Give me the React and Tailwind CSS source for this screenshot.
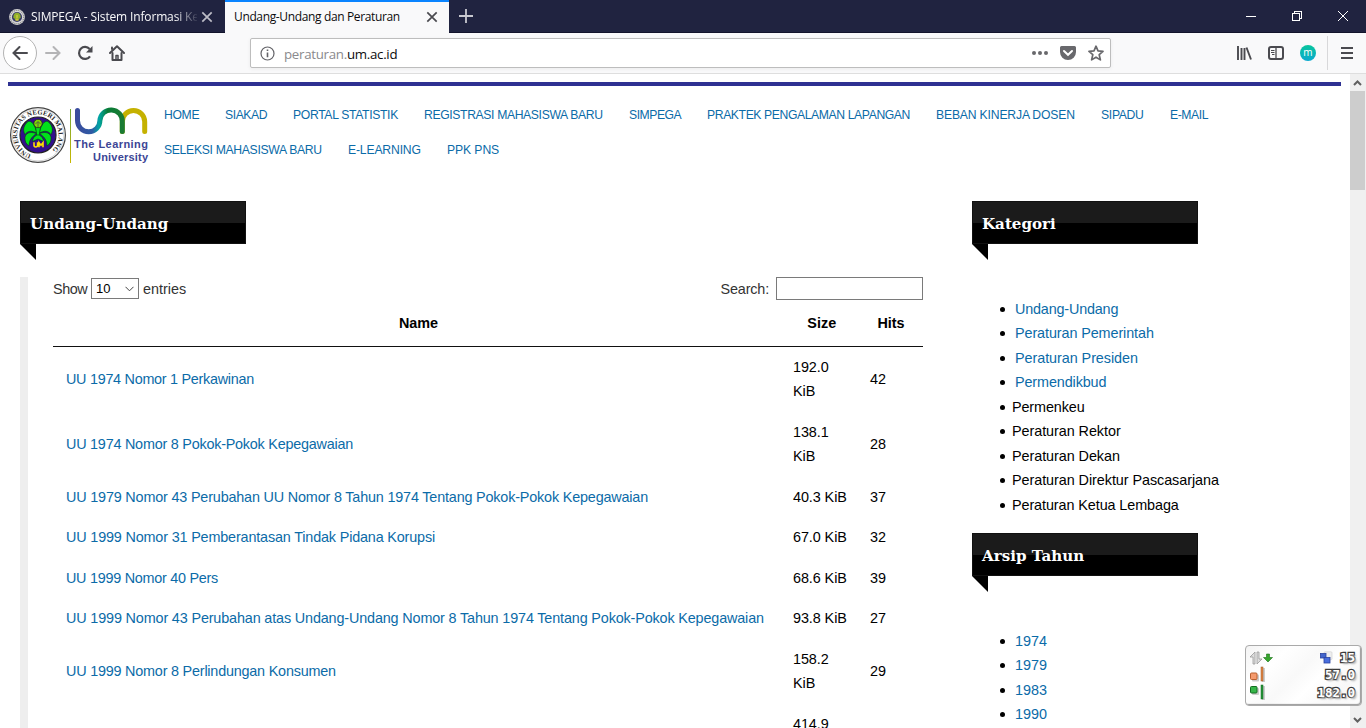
import React from "react";

const NAV_TOP = [
  ["HOME", "w-[35px] tracking-[-0.35px]"],
  ["SIAKAD", "w-[42px] tracking-[-0.43px]"],
  ["PORTAL STATISTIK", "w-[105px] tracking-[-0.34px]"],
  ["REGISTRASI MAHASISWA BARU", "w-[179px] tracking-[-0.37px]"],
  ["SIMPEGA", "w-[52px] tracking-[-0.47px]"],
  ["PRAKTEK PENGALAMAN LAPANGAN", "w-[203px] tracking-[-0.40px]"],
  ["BEBAN KINERJA DOSEN", "w-[139px] tracking-[-0.18px]"],
  ["SIPADU", "w-[43px] tracking-[-0.32px]"],
  ["E-MAIL", "w-[38px] tracking-[-0.43px]"],
];
const NAV_BOTTOM = [
  ["SELEKSI MAHASISWA BARU", "w-[158px] tracking-[-0.32px]"],
  ["E-LEARNING", "w-[73px] tracking-[-0.17px]"],
  ["PPK PNS", "w-[52px] tracking-[-0.1px]"],
];

const ROWS = [
  ["UU 1974 Nomor 1 Perkawinan", ["192.0", "KiB"], "42", "tracking-[-0.28px]"],
  ["UU 1974 Nomor 8 Pokok-Pokok Kepegawaian", ["138.1", "KiB"], "28", "tracking-[-0.23px]"],
  ["UU 1979 Nomor 43 Perubahan UU Nomor 8 Tahun 1974 Tentang Pokok-Pokok Kepegawaian", ["40.3 KiB"], "37", "tracking-[-0.178px]"],
  ["UU 1999 Nomor 31 Pemberantasan Tindak Pidana Korupsi", ["67.0 KiB"], "32", "tracking-[-0.165px]"],
  ["UU 1999 Nomor 40 Pers", ["68.6 KiB"], "39", "tracking-[-0.27px]"],
  ["UU 1999 Nomor 43 Perubahan atas Undang-Undang Nomor 8 Tahun 1974 Tentang Pokok-Pokok Kepegawaian", ["93.8 KiB"], "27", "tracking-[-0.150px]"],
  ["UU 1999 Nomor 8 Perlindungan Konsumen", ["158.2", "KiB"], "29", "tracking-[-0.21px]"],
  ["", ["414.9", "KiB"], "", ""],
];

const CATEGORIES = [
  ["Undang-Undang", true, "tracking-[-0.18px]"], ["Peraturan Pemerintah", true, "tracking-[-0.1px]"],
  ["Peraturan Presiden", true, "tracking-[-0.06px]"], ["Permendikbud", true, "tracking-[-0.12px]"],
  ["Permenkeu", false, "tracking-[-0.12px]"], ["Peraturan Rektor", false, "tracking-[-0.06px]"],
  ["Peraturan Dekan", false, "tracking-[-0.06px]"], ["Peraturan Direktur Pascasarjana", false, "tracking-[-0.06px]"],
  ["Peraturan Ketua Lembaga", false, "tracking-[-0.09px]"],
];
const YEARS = [["1974", true, ""], ["1979", true, ""], ["1983", true, ""], ["1990", true, ""]];

function Cross({ className }) {
  return (
    <svg className={className} width="12" height="12" viewBox="0 0 12 12" fill="none" stroke="currentColor" strokeWidth="1.7">
      <path d="M1.3 1.3l9.4 9.4M10.7 1.3l-9.4 9.4" />
    </svg>
  );
}

function SealMini() {
  return (
    <svg width="16" height="16" viewBox="0 0 16 16">
      <circle cx="8" cy="8" r="7.900" fill="#d9d9d9" />
      <circle cx="8" cy="8" r="6.700" fill="none" stroke="#8f8f8f" strokeWidth="1.200" strokeDasharray="1.200 .8" />
      <circle cx="8" cy="8" r="5.100" fill="#3a3d6a" />
      <path d="M8 3.800c2.400 0 3.800 1.800 3.600 4.500L9.500 11h-3L4.400 8.300C4.200 5.600 5.600 3.800 8 3.800z" fill="#8fae2c" />
      <path d="M8 6v3.500M6.500 11h3" stroke="#d8cf3a" strokeWidth="1.300" />
    </svg>
  );
}

function Seal() {
  return (
    <svg width="58" height="58" viewBox="0 0 58 58">
      <circle cx="29" cy="29" r="27.400" fill="#fff" stroke="#444" strokeWidth="1.200" />
      <circle cx="29" cy="29" r="25.900" fill="none" stroke="#aaa" strokeWidth="0.500" />
      <path id="sealRing" d="M22.200 48.600A20.700 20.700 0 1 1 37.800 47.700" fill="none" />
      <text fontFamily="Liberation Serif, serif" fontSize="6.600" fontWeight="bold" fill="#222" letterSpacing="0.120">
        <textPath href="#sealRing">UNIVERSITAS NEGERI MALANG</textPath>
      </text>
      <circle cx="29" cy="29" r="18" fill="#330f8c" stroke="#222" strokeWidth="1.200" />
      <g fill="#00e01a" stroke="#063c10" strokeWidth="0.600">
        <path d="M27.800 27C25 15 20 13.500 17.500 17c-3.500 4-3.500 8-1.500 11.500 3-4 6.500-4 11.800-1.500z" />
        <path d="M30.200 27C33 15 38 13.500 40.500 17c3.500 4 3.500 8 1.500 11.500-3-4-6.500-4-11.800-1.500z" />
        <path d="M27.500 27.500c-7-2.500-11 0-11.500 4-.3 3.500 1 6.500 4 8.500 0-5.500 2.500-9 7.500-12.500z" />
        <path d="M30.500 27.500c7-2.500 11 0 11.500 4 .3 3.500-1 6.500-4 8.500 0-5.500-2.500-9-7.500-12.500z" />
        <path d="M28.500 28.500c-3.500 2-5 4-5 7l5.500-2.500 5.500 2.500c0-3-1.500-5-5-7z" />
        <path d="M26.500 20h5l-1.200 9h-2.600z" />
      </g>
      <circle cx="29" cy="17.500" r="4.200" fill="#7fd800" stroke="#222" strokeWidth="0.800" />
      <path d="M26.500 18l2.500-2.500 2.500 2.500M29 16v5" stroke="#445" fill="none" strokeWidth=".8" />
      <path d="M25 36.200v2.800q0 2 1.800 2t1.800-2v-2.800M30 41.200v-4.500l2 2.600 2-2.600v4.500" stroke="#ffe000" strokeWidth="1.600" fill="none" />
    </svg>
  );
}

function Wordmark() {
  return (
    <svg width="82" height="58" viewBox="0 0 82 58" fill="none">
      <defs>
        <linearGradient id="bar" x1="0" y1="0" x2="0" y2="1">
          <stop offset="0" stopColor="#74a63a" /><stop offset="1" stopColor="#c9b800" />
        </linearGradient>
        <linearGradient id="arcA" gradientUnits="userSpaceOnUse" x1="8" y1="0" x2="58" y2="0">
          <stop offset="0" stopColor="#3c4a9c" /><stop offset="0.350" stopColor="#2e5ca5" />
          <stop offset="0.480" stopColor="#00a7a5" /><stop offset="0.650" stopColor="#087c38" /><stop offset="1" stopColor="#1d7b32" />
        </linearGradient>
      </defs>
      <rect x="3" y="3" width="1" height="54" fill="url(#bar)" />
      <path d="M55.300 25.500V15.700A11.200 11.200 0 0 1 77.700 15.700V25.500" stroke="#c5b100" strokeWidth="5" strokeLinecap="round" />
      <path d="M10.500 4.500V14.500A11.200 11.200 0 0 0 32.900 14.500A11.200 11.200 0 0 1 55.300 15.700V25.500" stroke="url(#arcA)" strokeWidth="5" strokeLinecap="round" />
      <g fontFamily="Liberation Sans, sans-serif" fontWeight="bold" fontSize="11" fill="#3c4595">
        <text x="7" y="41.500" textLength="74">The Learning</text>
        <text x="26" y="54.500" textLength="55">University</text>
      </g>
    </svg>
  );
}

function TabStrip() {
  return (
    <div className="flex h-[33px] shrink-0 border-b border-[#12142b] bg-[#202340] font-['Open_Sans','Noto_Sans',sans-serif] text-[12px]">
      <div className="flex w-[225px] items-center pl-[9px] pt-px text-[#f9f9fa]">
        <SealMini />
        <span className="ml-[6px] w-[166px] overflow-hidden whitespace-nowrap tracking-[-0.15px] [mask-image:linear-gradient(to_right,black_144px,transparent_168px)]">
          SIMPEGA - Sistem Informasi Kep
        </span>
        <Cross className="ml-[4px] text-[#bcbcc6]" />
      </div>
      <div className="-mb-px flex w-[224px] items-center border-t-2 border-[#0a84ff] bg-[#f9f9fa] pb-px pl-[9px] text-[#0c0c0d]">
        <span className="w-[192px] whitespace-nowrap tracking-[-0.36px]">Undang-Undang dan Peraturan</span>
        <Cross className="text-[#4a4a4f]" />
      </div>
      <div className="flex items-center pl-[10px]">
        <svg width="14" height="14" viewBox="0 0 14 14" stroke="#c8c8d0" strokeWidth="1.800"><path d="M7 0v14M0 7h14" /></svg>
      </div>
      <div className="ml-auto flex items-center gap-9 pr-[18px] text-white">
        <svg width="10" height="10" viewBox="0 0 10 10" stroke="currentColor" shapeRendering="crispEdges"><path d="M0 5.500h10" /></svg>
        <svg width="10" height="10" viewBox="0 0 10 10" stroke="currentColor" fill="none" shapeRendering="crispEdges"><path d="M.5 2.500h7v7h-7zM2.500 2V.5h7v7H8" /></svg>
        <svg width="10" height="10" viewBox="0 0 10 10" stroke="currentColor"><path d="M0 0l10 10M10 0L0 10" /></svg>
      </div>
    </div>
  );
}

function Toolbar() {
  return (
    <div className="flex h-[41px] shrink-0 items-center border-b border-[#dedede] bg-[#f9f9fa]">
      <div className="ml-[3px] flex h-[34px] w-[34px] items-center justify-center rounded-full border border-[#b3b3b3] bg-white">
        <svg width="16" height="16" viewBox="0 0 16 16" fill="none" stroke="#4a4a4f" strokeWidth="2" strokeLinecap="round"><path d="M15 8H1.500M7.500 2L1.500 8l6 6" /></svg>
      </div>
      <svg className="ml-[8px]" width="16" height="16" viewBox="0 0 16 16" fill="none" stroke="#b4b4b6" strokeWidth="2" strokeLinecap="round"><path d="M1 8h13.500M8.500 2l6 6-6 6" /></svg>
      <svg className="ml-[16px]" width="16" height="16" viewBox="0 0 16 16" fill="none" stroke="#4a4a4f" strokeWidth="2.200">
        <path d="M13 11.300A6 6 0 1 1 12.600 4" /><path d="M15.500 1v6.500H9z" fill="#4a4a4f" stroke="none" />
      </svg>
      <svg className="ml-[16px]" width="16" height="16" viewBox="0 0 16 16" fill="none" stroke="#4a4a4f" strokeWidth="2" strokeLinejoin="round" strokeLinecap="round">
        <path d="M1 8l7-6.800L15 8" /><path d="M3.500 8v7h9V8" /><path d="M7 15v-4.500h2V15" strokeWidth="1.500" /><path d="M3 2.500V4" />
      </svg>
      <div className="ml-[125px] flex h-[30px] w-[861px] items-center rounded-[2px] border border-[#bdbdbd] bg-white pl-[9px] pr-[6px] shadow-[0_1px_4px_rgba(0,0,0,0.06)]">
        <svg width="15" height="15" viewBox="0 0 15 15" fill="none" stroke="#636368"><circle cx="7.500" cy="7.500" r="6.500" strokeWidth="1.200" /><path d="M7.500 6.500v4.800M7.500 3.500v1.600" strokeWidth="1.600" /></svg>
        <span className="ml-[9px] pt-[3px] font-['Open_Sans','Noto_Sans',sans-serif] text-[13.300px] tracking-[-0.290px] text-[#8a8a8d]">peraturan.<span className="text-[#0c0c0d]">um.ac.id</span></span>
        <div className="ml-auto flex items-center gap-3 text-[#68686c]">
          <svg width="16" height="16" viewBox="0 0 16 16" fill="currentColor"><circle cx="2" cy="8" r="2" /><circle cx="8" cy="8" r="2" /><circle cx="14" cy="8" r="2" /></svg>
          <svg width="16" height="16" viewBox="0 0 16 16"><path d="M1.500 1h13A1.500 1.500 0 0 1 16 2.500V7A8 8 0 0 1 0 7V2.500A1.500 1.500 0 0 1 1.500 1z" fill="currentColor" /><path d="M4 6l4 3.800L12 6" stroke="#fff" strokeWidth="2" strokeLinecap="round" fill="none" /></svg>
          <svg width="16" height="16" viewBox="0 0 16 16" fill="none" stroke="currentColor" strokeWidth="1.700" strokeLinejoin="round"><path d="M8 1.200l2 4.700 5 .5-3.800 3.300 1.200 5.200L8 12.200l-4.400 2.700 1.200-5.200L1 6.400l5-.5z" /></svg>
        </div>
      </div>
      <div className="ml-auto flex items-center gap-4 text-[#4a4a4f]">
        <svg width="16" height="16" viewBox="0 0 16 16" stroke="currentColor"><path d="M2 1v14M5.500 3v12M8.500 3v12M10.500 2.500L15 14.500" strokeWidth="1.900" /></svg>
        <svg width="16" height="16" viewBox="0 0 16 16" stroke="currentColor" fill="none"><rect x="1" y="2" width="14" height="12" rx="2" strokeWidth="2" /><path d="M8 2v12" strokeWidth="1.300" /><path d="M3 5.500h3.500M3 7.500h3.500M4 9.500h2.500" /></svg>
        <svg width="16" height="16" viewBox="0 0 16 16"><defs><linearGradient id="av" x1="0" y1="0" x2="0" y2="1"><stop offset="0" stopColor="#08c59c" /><stop offset="1" stopColor="#0aa9cf" /></linearGradient></defs><circle cx="8" cy="8" r="8" fill="url(#av)" /><text x="8" y="10.800" textAnchor="middle" fontFamily="Open Sans, sans-serif" fontSize="10" fill="#fff">m</text></svg>
      </div>
      <div className="ml-[11px] h-[34px] w-px bg-[#d8d8da]" />
      <svg className="ml-[13px] mr-[13px]" width="12" height="12" viewBox="0 0 12 12" stroke="#4a4a4f" strokeWidth="2"><path d="M0 1h12M0 6h12M0 11h12" /></svg>
    </div>
  );
}

function Ribbon({ children }) {
  return (
    <div className="w-[226px]">
      <h3 className="h-[43px] border border-[#111] bg-[linear-gradient(to_bottom,#1b1b1b_21px,#000_21px)] pl-[9px] pt-[10px] font-['DejaVu_Serif',serif] text-[15.100px] font-bold leading-[25px] text-white">{children}</h3>
      <svg className="block" width="16" height="16" viewBox="0 0 16 16"><path d="M0 0h16v16z" /></svg>
    </div>
  );
}

function BulletList({ items }) {
  return (
    <ul className="text-[14.400px] leading-[24.480px]">
      {items.map(([label, link, spacing]) => (
        <li key={label} className={"flex items-center whitespace-nowrap " + spacing}>
          <span className="h-[5px] w-[5px] rounded-full bg-black" />
          {link ? <span className="ml-[10px] text-[#0b6ba8]">{label}</span> : <span className="ml-[7px] text-black">{label}</span>}
        </li>
      ))}
    </ul>
  );
}

function Table() {
  return (
    <div className="w-[870px] text-[14.400px] leading-[24.480px]">
      <div className="flex h-[23px] items-center justify-between text-[#333]">
        <div className="flex items-center">
          <span className="w-[34px] pt-[2px] tracking-[-0.450px]">Show</span>
          <div className="mx-[4px] flex h-[21px] w-[48px] items-center justify-between border border-[#7a7a7a] pl-[4px] pr-[4px] pt-[2px] text-[13px] text-black">
            10
            <svg className="mb-[2px]" width="9" height="6" viewBox="0 0 9 6" fill="none" stroke="#444"><path d="M.5.8l4 4 4-4" /></svg>
          </div>
          <span className="pt-[2px]">entries</span>
        </div>
        <div className="flex items-center">
          <span className="pt-[2px] tracking-[-0.160px]">Search:</span>
          <div className="ml-[7px] h-[23px] w-[147px] border border-[#7a7a7a] bg-white" />
        </div>
      </div>
      <div className="flex h-[47px] items-center border-b border-[#111] font-bold text-black">
        <div className="w-[731px] text-center">Name</div>
        <div className="w-[75.500px] text-center">Size</div>
        <div className="w-[63px] text-center">Hits</div>
      </div>
      {ROWS.map(([name, size, hits, spacing], i) => (
        <div key={i} className="flex items-center py-2 text-black">
          <div className={"w-[740px] whitespace-nowrap pl-[13px] text-[#0b6ba8] " + spacing}>{name}</div>
          <div className="w-[77px] tracking-[-0.080px]">{size.map((s) => <div key={s} className="whitespace-nowrap">{s}</div>)}</div>
          <div>{hits}</div>
        </div>
      ))}
    </div>
  );
}

function Meter() {
  const num = "font-['DejaVu_Sans_Mono',monospace] text-[12.500px] font-bold leading-none text-white [-webkit-text-stroke:2.500px_#3a3a3a] [paint-order:stroke_fill] [text-shadow:2px_2px_2px_#aaa]";
  return (
    <div className="absolute left-[1245px] top-[645px] flex h-[61px] w-[117px] flex-col justify-between rounded-[4px] border border-[#aaa] bg-[linear-gradient(135deg,#f4f4f4,#fff_25%,#f9f9f9_45%,#fff_60%,#f8f8f8_80%,#fdfdfd)] py-[5px] pl-[3px] pr-[6px] shadow-[inset_-1px_-1px_1px_#999]">
      <div className="flex h-[14px] items-center">
        <svg width="24" height="14" viewBox="0 0 24 14">
          <path d="M1 6l5-5v12H4V6zM8 1h2v7h3l-5 5z" fill="#ddd" stroke="#999" strokeWidth=".8" />
          <path d="M17.500 3h3v3.500h3L19 11l-4.500-4.500h3z" fill="#36a52b" stroke="#17701a" strokeWidth=".6" />
        </svg>
        <svg className="ml-auto mr-[7px]" width="14" height="14" viewBox="0 0 14 14"><rect x="5" y=".8" width="8" height="8" rx="1" fill="#eee" stroke="#ccc" strokeWidth=".6" /><rect x="1.500" y="2.500" width="5.500" height="4.500" fill="#4466cc" stroke="#2a43a0" strokeWidth=".8" /><rect x="5" y="6.500" width="6" height="5.500" fill="#4a6fdd" stroke="#2a43a0" strokeWidth=".8" /></svg>
        <span className={num}>15</span>
      </div>
      <div className="flex h-[18px] items-center">
        <svg width="18" height="18" viewBox="0 0 18 18"><rect x="3" y="9.500" width="7" height="7" rx="1" fill="#ccc" /><rect x="1.500" y="8" width="6.500" height="6.500" rx="1" fill="#f59a6d" stroke="#b9602f" /><rect x="13" y="3" width="3" height="14" fill="#ccc" /><rect x="12" y="2" width="2" height="14" fill="#e28745" stroke="#9a5525" strokeWidth=".5" /></svg>
        <span className={num + " ml-auto pt-[2px]"}>57.0</span>
      </div>
      <div className="flex h-[18px] items-center">
        <svg width="18" height="18" viewBox="0 0 18 18"><rect x="3" y="5" width="7" height="7" rx="1" fill="#ccc" /><rect x="1.500" y="3.500" width="6.500" height="6.500" rx="1" fill="#35b548" stroke="#126d20" /><rect x="13" y="3" width="3" height="14" fill="#ccc" /><rect x="12" y="2" width="2" height="14" fill="#27953a" stroke="#126d20" strokeWidth=".5" /></svg>
        <span className={num + " ml-auto pt-[3px]"}>182.0</span>
      </div>
    </div>
  );
}

function NavRow({ items }) {
  return (
    <div className="flex h-[35px] items-center gap-[26px] whitespace-nowrap">
      {items.map(([t, cls]) => <span key={t} className={cls}>{t}</span>)}
    </div>
  );
}

export default function App() {
  return (
    <div className="relative flex h-[728px] w-[1366px] flex-col overflow-hidden bg-white font-['Liberation_Sans',Arial,sans-serif]">
      <TabStrip />
      <Toolbar />
      <div className="flex min-h-0 flex-1">
        <main className="h-full w-[1350px] overflow-hidden pl-2 pt-2">
          <div className="h-1 w-[1333px] bg-[#2e3192]" />
          <header className="flex h-[115px] pt-[11px]">
            <div className="flex w-[156px] pl-[1px] pt-[9px]">
              <Seal />
              <Wordmark />
            </div>
            <nav className="text-[12.200px] leading-[18px] text-[#0b6ba8]">
              <NavRow items={NAV_TOP} />
              <NavRow items={NAV_BOTTOM} />
            </nav>
          </header>
          <div className="flex pl-[12px]">
            <section className="w-[952px]">
              <Ribbon>Undang-Undang</Ribbon>
              <div className="mt-[17px] border-l-8 border-[#eee] pl-[25px]"><Table /></div>
            </section>
            <aside>
              <Ribbon>Kategori</Ribbon>
              <div className="pb-[16px] pl-[28px] pt-[37px]"><BulletList items={CATEGORIES} /></div>
              <Ribbon>Arsip Tahun</Ribbon>
              <div className="pl-[28px] pt-[36.600px]"><BulletList items={YEARS} /></div>
            </aside>
          </div>
        </main>
        <div className="flex w-4 flex-col items-center bg-[#f0f0f0]">
          <svg className="h-[17px] w-4 shrink-0" viewBox="0 0 16 17" fill="none" stroke="#606060" strokeWidth="2"><path d="M4 11l3.500-3.500L11 11" /></svg>
          <div className="mr-px h-[99px] w-[15px] shrink-0 bg-[#cdcdcd]" />
          <svg className="mt-auto h-[17px] w-4 shrink-0" viewBox="0 0 16 17" fill="none" stroke="#606060" strokeWidth="2"><path d="M4 7l3.500 3.500L11 7" /></svg>
        </div>
      </div>
      <Meter />
    </div>
  );
}
